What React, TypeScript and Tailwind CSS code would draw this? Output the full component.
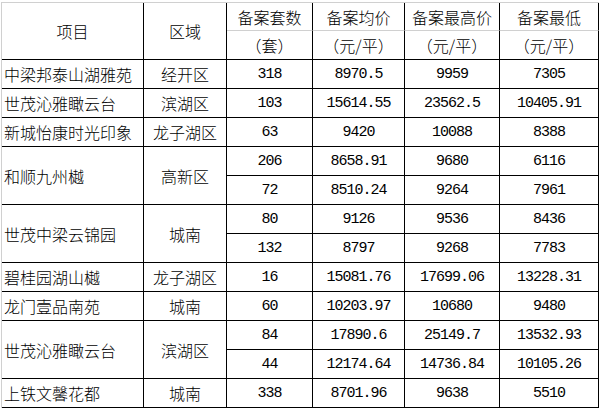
import React from "react";

type Sub = [string, string, string, string];

interface Row {
  name: string;
  area: string;
  subs: Sub[];
}

const rows: Row[] = [
  { name: "中梁邦泰山湖雅苑", area: "经开区", subs: [["318", "8970.5", "9959", "7305"]] },
  { name: "世茂沁雅瞰云台", area: "滨湖区", subs: [["103", "15614.55", "23562.5", "10405.91"]] },
  { name: "新城怡康时光印象", area: "龙子湖区", subs: [["63", "9420", "10088", "8388"]] },
  {
    name: "和顺九州樾",
    area: "高新区",
    subs: [
      ["206", "8658.91", "9680", "6116"],
      ["72", "8510.24", "9264", "7961"],
    ],
  },
  {
    name: "世茂中梁云锦园",
    area: "城南",
    subs: [
      ["80", "9126", "9536", "8436"],
      ["132", "8797", "9268", "7783"],
    ],
  },
  { name: "碧桂园湖山樾", area: "龙子湖区", subs: [["16", "15081.76", "17699.06", "13228.31"]] },
  { name: "龙门壹品南苑", area: "城南", subs: [["60", "10203.97", "10680", "9480"]] },
  {
    name: "世茂沁雅瞰云台",
    area: "滨湖区",
    subs: [
      ["84", "17890.6", "25149.7", "13532.93"],
      ["44", "12174.64", "14736.84", "10105.26"],
    ],
  },
  { name: "上铁文馨花都", area: "城南", subs: [["338", "8701.96", "9638", "5510"]] },
];

const cell = "p-0 border-r border-b border-black align-middle";
const num =
  "text-center font-['Liberation_Mono','Noto_Sans_CJK_SC',monospace] text-[15px] tracking-[-1px]";

export default function App() {
  return (
    <div className="w-[600px] h-[410px] bg-white pl-[1px] pt-[2px] text-black font-['Noto_Sans_CJK_SC',sans-serif] font-light text-[16px] leading-none">
      <table className="table-fixed border-separate border-spacing-0 w-[597px] border-l border-t border-l-[#d0d0d0] border-t-[#d0d0d0]">
        <colgroup>
          <col className="w-[142px]" />
          <col className="w-[83px]" />
          <col className="w-[86px]" />
          <col className="w-[92px]" />
          <col className="w-[95px]" />
          <col className="w-[99px]" />
        </colgroup>
        <thead>
          <tr className="h-[28px]">
            <th rowSpan={2} className={`${cell} font-light text-center`}>
              项目
            </th>
            <th rowSpan={2} className={`${cell} font-light text-center`}>
              区域
            </th>
            <th className={`${cell} font-light text-center border-b-[#d0d0d0]`}>备案套数</th>
            <th className={`${cell} font-light text-center border-b-[#d0d0d0]`}>备案均价</th>
            <th className={`${cell} font-light text-center border-b-[#d0d0d0]`}>备案最高价</th>
            <th className={`${cell} font-light text-center border-b-[#d0d0d0]`}>备案最低</th>
          </tr>
          <tr className="h-[29px]">
            <th className={`${cell} font-light text-center`}>（套）</th>
            <th className={`${cell} font-light text-center`}>（元/平）</th>
            <th className={`${cell} font-light text-center`}>（元/平）</th>
            <th className={`${cell} font-light text-center`}>（元/平）</th>
          </tr>
        </thead>
        <tbody>
          {rows.map((r, i) =>
            r.subs.map((s, j) => (
              <tr key={`${i}-${j}`} className="h-[29px]">
                {j === 0 && (
                  <>
                    <td rowSpan={r.subs.length} className={`${cell} text-left pl-[2px] whitespace-nowrap`}>
                      {r.name}
                    </td>
                    <td rowSpan={r.subs.length} className={`${cell} text-center`}>
                      {r.area}
                    </td>
                  </>
                )}
                {s.map((v, k) => (
                  <td key={k} className={`${cell} ${num}`}>
                    {v}
                  </td>
                ))}
              </tr>
            ))
          )}
        </tbody>
      </table>
    </div>
  );
}
